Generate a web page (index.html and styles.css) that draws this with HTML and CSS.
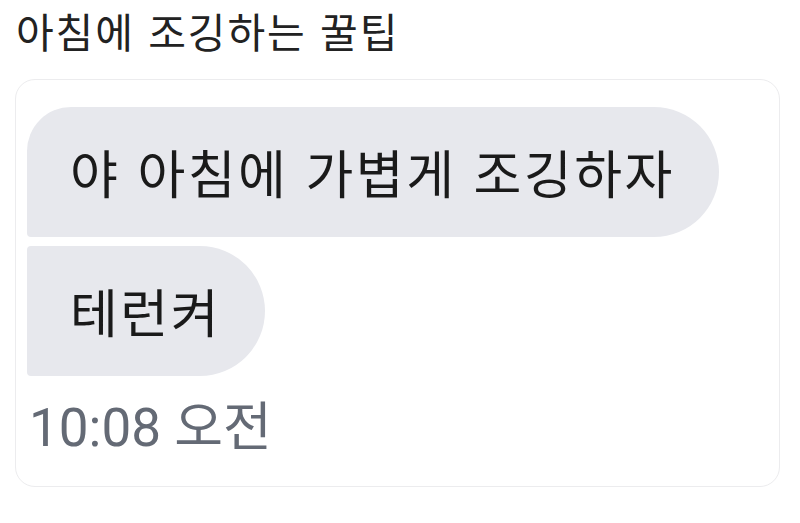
FILE: index.html
```html
<!DOCTYPE html>
<html lang="ko">
<head>
<meta charset="utf-8">
<title>아침에 조깅하는 꿀팁</title>
<link rel="stylesheet" href="styles.css">
</head>
<body>
  <h1 class="post-title">아침에 조깅하는 꿀팁</h1>
  <section class="chat-card">
    <div class="thread">
      <p class="bubble bubble-first">야 아침에 가볍게 조깅하자</p>
      <p class="bubble bubble-last">테런켜</p>
    </div>
    <time class="sent-at">10:08 오전</time>
  </section>
</body>
</html>
```

FILE: styles.css
```css
html, body {
  margin: 0;
  padding: 0;
  background: #ffffff;
}

body {
  width: 800px;
  height: 523px;
  overflow: hidden;
  font-family: "Noto Sans CJK KR", "Noto Sans", sans-serif;
  color: #1b1b1b;
}

.post-title {
  margin: 0;
  padding: 0 0 0 16px;
  font-size: 41px;
  font-weight: 400;
  letter-spacing: 1.9px;
  line-height: 60px;
  color: #222222;
  height: 77px;
  box-sizing: border-box;
}

.chat-card {
  margin: 2px 0 0 15px;
  width: 765px;
  height: 408px;
  box-sizing: border-box;
  border: 1px solid #ececee;
  border-radius: 20px;
  padding: 27px 0 0 11px;
  display: flex;
  flex-direction: column;
}

.thread {
  display: flex;
  flex-direction: column;
  align-items: flex-start;
  gap: 9px;
}

.bubble {
  margin: 0;
  background: #e7e8ed;
  font-size: 52px;
  letter-spacing: 2.5px;
  line-height: 60px;
  padding: 35px 44px 35px 43px;
  color: #1a1a1a;
  white-space: nowrap;
}

.bubble-first {
  border-radius: 44px 65px 65px 4px;
}

.bubble-last {
  border-radius: 4px 65px 65px 4px;
}

.sent-at {
  display: block;
  margin: 22px 0 0 2px;
  font-family: "Roboto", "Noto Sans CJK KR", sans-serif;
  font-size: 53px;
  line-height: 60px;
  color: #646a75;
}
```
